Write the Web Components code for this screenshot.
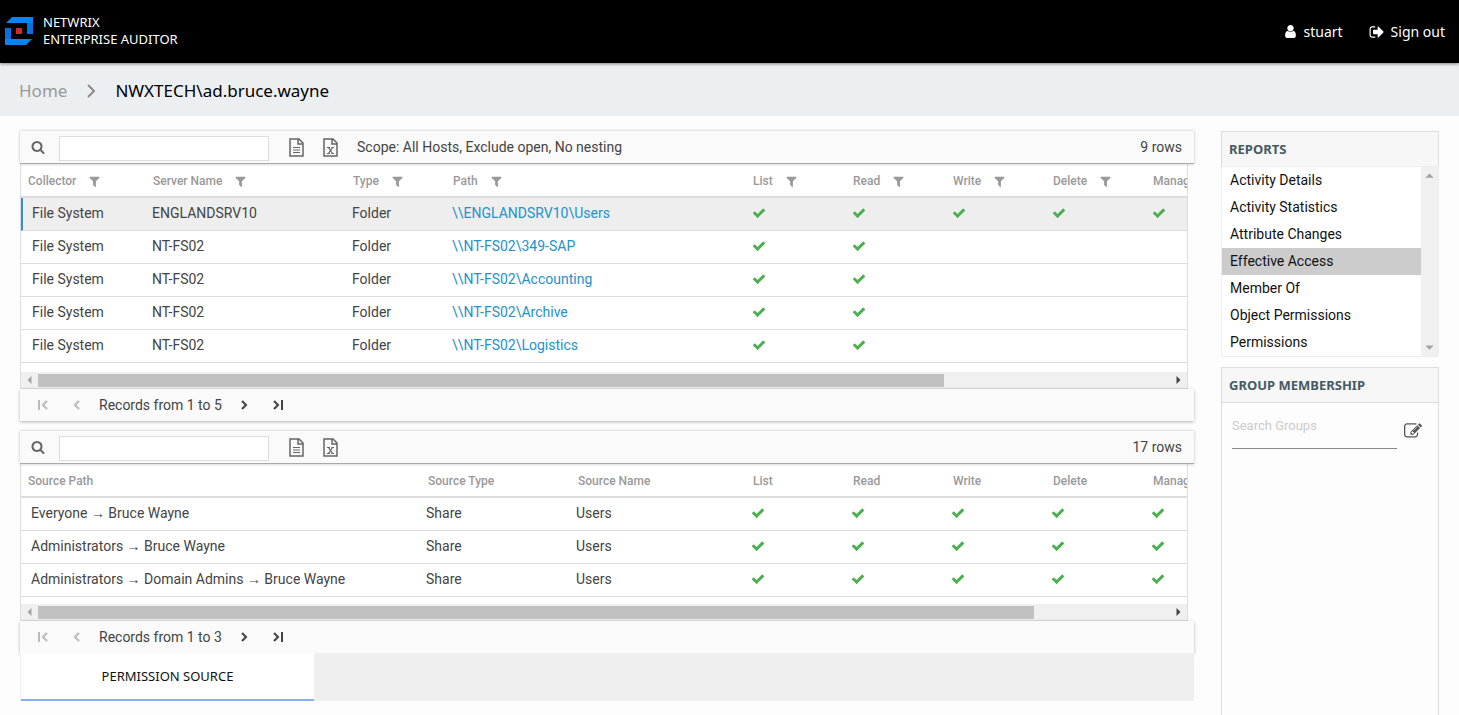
<!DOCTYPE html>
<html lang="en">
<head>
<meta charset="utf-8">
<title>Netwrix Enterprise Auditor</title>
<style>
  html, body { height: 100%; }
  body { margin: 0; background: #fdfdfd; font-family: Roboto, "Liberation Sans", sans-serif; font-size: 14px; color: #444; }
</style>
</head>
<body>
<auditor-app></auditor-app>

<template id="tpl-app">
  <style>
    :host { display: flex; flex-direction: column; min-height: 100%; height: 100%; }
    .content { flex: 1; display: flex; gap: 27px; padding: 15px 20px 0; min-height: 0; }
    main { flex: 1; min-width: 0; display: flex; flex-direction: column; gap: 10px; }
    aside { flex: none; width: 218px; display: flex; flex-direction: column; gap: 10px; }
  </style>
  <app-header user="stuart"></app-header>
  <bread-crumb>NWXTECH\ad.bruce.wayne</bread-crumb>
  <div class="content">
    <main>
      <data-grid id="access"></data-grid>
      <div>
        <data-grid id="sources"></data-grid>
        <tab-bar>PERMISSION SOURCE</tab-bar>
      </div>
    </main>
    <aside>
      <report-list></report-list>
      <group-membership></group-membership>
    </aside>
  </div>
</template>

<template id="tpl-header">
  <style>
    :host { display: flex; position: relative; z-index: 1; align-items: center; justify-content: space-between; box-sizing: border-box; height: 63px; padding: 0 14px 2px 5px; background: #000; color: #fff; box-shadow: 0 1px 3px rgba(0,0,0,.45); font-family: "Noto Sans", "Open Sans", sans-serif; }
    .brand { display: flex; gap: 10px; align-items: center; font-size: 13px; line-height: 17px; }
    nav { display: flex; gap: 26px; font-size: 14px; line-height: 20px; padding-top: 2px; }
    a { display: flex; align-items: center; gap: 6px; color: inherit; text-decoration: none; }
  </style>
  <div class="brand">
    <svg width="28" height="28" viewBox="0 0 28 28" aria-hidden="true">
      <path fill="#0a84f5" d="M7 0H28V17H22V6H1z"/>
      <path fill="#0a6fe0" d="M22 6H28V17H22z"/>
      <path fill="#0a84f5" d="M0 11H6V22H27L21 28H0z"/>
      <path fill="#0a6fe0" d="M0 11H6V22H0z"/>
      <path fill="#d3272f" d="M11 11h6v6h-6z"/>
    </svg>
    <div>NETWRIX<br>ENTERPRISE AUDITOR</div>
  </div>
  <nav>
    <a href="#user"><ui-icon name="user" size="15"></ui-icon><span class="user"></span></a>
    <a href="#signout"><ui-icon name="signout" size="16"></ui-icon>Sign out</a>
  </nav>
</template>

<template id="tpl-crumb">
  <style>
    :host { display: flex; align-items: center; gap: 20px; box-sizing: border-box; height: 53px; padding: 2px 19px 0; background: #eceff1; color: #000; font-family: "Noto Sans", "Open Sans", sans-serif; font-size: 17px; }
    a { color: #999; text-decoration: none; }
  </style>
  <a href="#home">Home</a>
  <svg width="8" height="14" viewBox="0 0 8 14" fill="none" stroke="#8c8c8c" stroke-width="2" aria-hidden="true"><path d="M1 1l6 6-6 6"/></svg>
  <span><slot></slot></span>
</template>

<template id="tpl-grid">
  <style>
    :host { display: block; }
    .bar { position: relative; display: flex; align-items: center; box-sizing: border-box; height: 32px; background: #fafafa; box-shadow: 0 1px 3px rgba(0,0,0,.3); }
    .tools { height: 33px; padding: 0 12px 0 11px; border-bottom: 1px solid #aaa; box-shadow: 0 0 3px rgba(0,0,0,.25); }
    button { all: unset; display: flex; color: #666; cursor: pointer; }
    input { box-sizing: border-box; align-self: flex-end; width: 210px; height: 25px; margin: 0 20px 2px 14px; border: 1px solid #ddd; background: #fff; font: inherit; }
    .files { display: flex; gap: 18px; margin-right: 18px; }
    .count { margin-left: auto; }
    .view { box-sizing: border-box; margin-right: 6px; border: 1px solid #ddd; border-top: 0; overflow: hidden; background: #fff; }
    .scroller { overflow: hidden; }
    table { table-layout: fixed; border-collapse: separate; border-spacing: 0; margin-bottom: var(--tail); }
    th, td { box-sizing: border-box; height: 33px; padding: 0 0 2px var(--inset); text-align: left; white-space: nowrap; vertical-align: middle; }
    th { height: 34px; padding: 2px 0 0 7px; border-bottom: 2px solid #ddd; color: #999; font-size: 12px; font-weight: 500; }
    th span { display: flex; align-items: center; gap: 12px; }
    td { border-bottom: 1px solid #ddd; font-family: Roboto, "Liberation Serif", serif; font-size: 14px; }
    td:first-child { padding-left: var(--lead); }
    td ui-icon { display: flex; color: #4caf50; }
    tr.selected td { background: #eee; }
    tr.selected td:first-child { border-left: 2px solid #3b8fc4; padding-left: 9px; }
    td a { color: #2392cf; text-decoration: none; }
    .pager { padding: 0 18px; }
    .pager span { margin: 0 19px; }
    .pager svg { display: block; fill: none; stroke: #444; stroke-width: 2; }
    .pager button:disabled svg { stroke: #bbb; }
    .step { margin: 0 25px 0 0; }
    .back { margin-right: 0; }
  </style>
  <div class="bar tools">
    <button aria-label="Search"><ui-icon name="search"></ui-icon></button>
    <input type="text" aria-label="Search rows">
    <div class="files">
      <button aria-label="Export to CSV"><ui-icon name="csv" size="16"></ui-icon></button>
      <button aria-label="Export to Excel"><ui-icon name="excel" size="16"></ui-icon></button>
    </div>
    <span class="scope"></span>
    <span class="count"></span>
  </div>
  <div class="view">
    <div class="scroller"><table><colgroup></colgroup><thead><tr></tr></thead><tbody></tbody></table></div>
    <scroll-track></scroll-track>
  </div>
  <div class="bar pager">
    <button class="step" disabled aria-label="First page"><svg width="10" height="10" viewBox="0 0 10 10"><path d="M1 0v10M9 1L5 5l4 4"/></svg></button>
    <button class="step back" disabled aria-label="Previous page"><svg width="7" height="10" viewBox="0 0 7 10"><path d="M6 1L2 5l4 4"/></svg></button>
    <span class="records"></span>
    <button class="step" aria-label="Next page"><svg width="7" height="10" viewBox="0 0 7 10"><path d="M1 1l4 4-4 4"/></svg></button>
    <button aria-label="Last page"><svg width="10" height="10" viewBox="0 0 10 10"><path d="M9 0v10M1 1l4 4-4 4"/></svg></button>
  </div>
</template>

<template id="tpl-track">
  <style>
    :host { display: flex; align-items: center; height: 16px; background: #f0f0f0; }
    :host([vertical]) { flex-direction: column; justify-content: space-between; width: 17px; height: auto; }
    .rail { flex: 1; height: 13px; }
    .thumb { width: var(--thumb); height: 100%; background: #c1c1c1; }
    :host([vertical]) .rail { display: none; }
    svg { flex: none; width: 17px; height: 16px; fill: #a3a3a3; }
    .end { fill: #444; }
    :host([vertical]) svg { height: 17px; transform: rotate(90deg); fill: #a3a3a3; }
  </style>
  <svg viewBox="0 0 16 16"><path d="M10 4v8L6 8z"/></svg>
  <div class="rail"><div class="thumb"></div></div>
  <svg class="end" viewBox="0 0 16 16"><path d="M6 4v8l4-4z"/></svg>
</template>

<template id="tpl-tabs">
  <style>
    :host { display: flex; position: relative; height: 48px; padding-left: 1px; background: #efefef; }
    button { all: unset; box-sizing: border-box; width: 293px; border-bottom: 2px solid #8ab0f0; background: #fff; color: #111; font-family: "Noto Sans", "Open Sans", sans-serif; font-size: 13px; text-align: center; cursor: pointer; }
  </style>
  <button role="tab" aria-selected="true"><slot></slot></button>
</template>

<template id="tpl-reports">
  <style>
    :host { display: block; }
    h2 { box-sizing: border-box; height: 36px; margin: 0; padding-left: 7px; border: 1px solid #ddd; border-bottom-color: #eee; background: #f7f7f7; color: #455a64; font: 700 13px/34px "Noto Sans", "Open Sans", sans-serif; }
    .body { display: flex; height: 189px; border: 1px solid #eee; border-top: 0; background: #fff; }
    ul { flex: 1; margin: 0; padding: 0; list-style: none; }
    a { display: block; padding-left: 8px; line-height: 27px; color: #111; text-decoration: none; }
    a[aria-current] { background: #ccc; }
  </style>
  <h2>REPORTS</h2>
  <div class="body">
    <ul>
      <li><a href="#details">Activity Details</a></li>
      <li><a href="#statistics">Activity Statistics</a></li>
      <li><a href="#attributes">Attribute Changes</a></li>
      <li><a href="#effective" aria-current="page">Effective Access</a></li>
      <li><a href="#memberof">Member Of</a></li>
      <li><a href="#object">Object Permissions</a></li>
      <li><a href="#permissions">Permissions</a></li>
    </ul>
    <scroll-track vertical></scroll-track>
  </div>
</template>

<template id="tpl-groups">
  <style>
    :host { display: block; flex: 1; border: 1px solid #ddd; border-bottom: 0; }
    h2 { height: 34px; margin: 0; padding-left: 7px; border-bottom: 1px solid #ddd; background: #f7f7f7; color: #455a64; font: 700 13px/34px "Noto Sans", "Open Sans", sans-serif; }
    .row { display: flex; gap: 7px; padding: 2px 16px 0 10px; }
    input { flex: 1; min-width: 0; box-sizing: border-box; height: 44px; padding: 0 0 2px; border: 0; border-bottom: 1px solid #888; background: none; font: 13px Roboto, sans-serif; outline: 0; }
    input::placeholder { color: #ccc; }
    button { all: unset; display: flex; align-items: center; padding-top: 8px; color: #555; cursor: pointer; }
  </style>
  <h2>GROUP MEMBERSHIP</h2>
  <div class="row">
    <input type="text" placeholder="Search Groups" aria-label="Search Groups">
    <button aria-label="Edit groups"><ui-icon name="edit" size="18"></ui-icon></button>
  </div>
</template>

<script>
const clone = id => document.getElementById(id).content.cloneNode(true);

class BaseElement extends HTMLElement {
  connectedCallback() {
    if (this.shadowRoot) return;
    this.attachShadow({ mode: "open" }).append(clone(this.constructor.template));
    this.ready();
  }
  ready() {}
  $(s) { return this.shadowRoot.querySelector(s); }
}

const ICONS = {
  check: '<path d="M1671 566q0 40-28 68l-724 724-136 136q-28 28-68 28t-68-28l-136-136-362-362q-28-28-28-68t28-68l136-136q28-28 68-28t68 28l294 295 656-657q28-28 68-28t68 28l136 136q28 28 28 68z"/>',
  filter: '<path d="M1595 295q17 41-14 70l-493 493v742q0 42-39 59-13 5-25 5-27 0-45-19l-256-256q-19-19-19-45v-486l-493-493q-31-29-14-70 17-39 59-39h1280q42 0 59 39z"/>',
  search: '<path d="M1216 832q0-185-131.5-316.5t-316.5-131.5-316.5 131.5-131.5 316.5 131.5 316.5 316.5 131.5 316.5-131.5 131.5-316.5zm512 832q0 52-38 90t-90 38q-54 0-90-38l-343-342q-179 124-399 124-143 0-273.5-55.5t-225-150-150-225-55.5-273.5 55.5-273.5 150-225 225-150 273.5-55.5 273.5 55.5 225 150 150 225 55.5 273.5q0 220-124 399l343 343q37 37 37 90z"/>',
  signout: '<path d="M704 1440q0 4 1 20t.5 26.5-3 23.5-10 19.5-20.5 6.5h-320q-119 0-203.5-84.5t-84.5-203.5v-704q0-119 84.5-203.5t203.5-84.5h320q13 0 22.5 9.5t9.5 22.5q0 4 1 20t.5 26.5-3 23.5-10 19.5-20.5 6.5h-320q-66 0-113 47t-47 113v704q0 66 47 113t113 47h312l11.5 1 11.5 3 8 5.5 7 9 2 13.5zm928-544q0 26-19 45l-544 544q-19 19-45 19t-45-19-19-45v-288h-448q-26 0-45-19t-19-45v-384q0-26 19-45t45-19h448v-288q0-26 19-45t45-19 45 19l544 544q19 19 19 45z"/>',
  user: '<path d="M1536 1399q0 109-62.5 187t-150.5 78h-854q-88 0-150.5-78t-62.5-187q0-85 8.5-160.5t31.5-152 58.5-131 94-89 134.5-34.5q131 128 313 128t313-128q76 0 134.5 34.5t94 89 58.5 131 31.5 152 8.5 160.5zm-256-887q0 159-112.5 271.5t-271.5 112.5-271.5-112.5-112.5-271.5 112.5-271.5 271.5-112.5 271.5 112.5 112.5 271.5z"/>',
  edit: '<path d="M888 1184l116-116-152-152-116 116v56h96v96h56zm440-720q-16-16-33 1l-350 350q-17 17-1 33t33-1l350-350q17-17 1-33zm80 594v190q0 119-84.5 203.5t-203.5 84.5h-832q-119 0-203.5-84.5t-84.5-203.5v-832q0-119 84.5-203.5t203.5-84.5h832q63 0 117 25 15 7 18 23 3 17-9 29l-49 49q-14 14-32 8-23-6-45-6h-832q-66 0-113 47t-47 113v832q0 66 47 113t113 47h832q66 0 113-47t47-113v-126q0-13 9-22l64-64q15-15 35-7t20 29zm-96-738l288 288-672 672h-288v-288zm444 132l-92 92-288-288 92-92q28-28 68-28t68 28l152 152q28 28 28 68t-28 68z"/>'
};
const SHEET = '<path d="M1 1h9l4 4v13H1zM9 1v5h5"/>';
const SHEETS = {
  csv: SHEET + '<path d="M4 9.500h7M4 12h7M4 14.500h7" stroke-width="1"/>',
  excel: SHEET + '<path d="M5.500 9.500l4 6M9.500 9.500l-4 6" stroke-width="1.300"/><path d="M4 9.500h3M8.500 9.500h2.500M4 15.500h3M8.500 15.500h2.500" stroke-width="1"/>'
};

customElements.define("ui-icon", class extends HTMLElement {
  connectedCallback() {
    if (this.shadowRoot) return;
    const name = this.getAttribute("name"), size = this.getAttribute("size") || 14;
    const svg = SHEETS[name]
      ? `<svg width="16" height="19" viewBox="0 0 16 19" fill="none" stroke="#666" stroke-width="1.500">${SHEETS[name]}</svg>`
      : `<svg width="${size}" height="${size}" viewBox="0 0 1792 1792" fill="currentColor">${ICONS[name]}</svg>`;
    this.attachShadow({ mode: "open" }).innerHTML = `<style>:host{display:inline-flex;vertical-align:middle}svg{display:block}</style>${svg}`;
  }
});

customElements.define("scroll-track", class extends BaseElement { static template = "tpl-track"; });
customElements.define("tab-bar", class extends BaseElement { static template = "tpl-tabs"; });
customElements.define("bread-crumb", class extends BaseElement { static template = "tpl-crumb"; });
customElements.define("report-list", class extends BaseElement { static template = "tpl-reports"; });
customElements.define("group-membership", class extends BaseElement { static template = "tpl-groups"; });
customElements.define("app-header", class extends BaseElement {
  static template = "tpl-header";
  ready() { this.$(".user").textContent = this.getAttribute("user"); }
});

const CHECK = '<ui-icon name="check" role="img" aria-label="Yes"></ui-icon>';
const GRIDS = {
  access: {
    scope: "Scope: All Hosts, Exclude open, No nesting", count: "9 rows", records: "Records from 1 to 5",
    filters: true, thumb: "80%", tail: "9px", lead: "11px", inset: "6px", selected: 0,
    columns: [["Collector", 125], ["Server Name", 200], ["Type", 100], ["Path", 300], ["List", 100], ["Read", 100], ["Write", 100], ["Delete", 100], ["Manage", 330]],
    rows: [
      ["File System", "ENGLANDSRV10", "Folder", "\\\\ENGLANDSRV10\\Users", 1, 1, 1, 1, 1],
      ["File System", "NT-FS02", "Folder", "\\\\NT-FS02\\349-SAP", 1, 1, 0, 0, 0],
      ["File System", "NT-FS02", "Folder", "\\\\NT-FS02\\Accounting", 1, 1, 0, 0, 0],
      ["File System", "NT-FS02", "Folder", "\\\\NT-FS02\\Archive", 1, 1, 0, 0, 0],
      ["File System", "NT-FS02", "Folder", "\\\\NT-FS02\\Logistics", 1, 1, 0, 0, 0]
    ]
  },
  sources: {
    scope: "", count: "17 rows", records: "Records from 1 to 3",
    filters: false, thumb: "88%", tail: "7px", lead: "10px", inset: "5px", selected: -1,
    columns: [["Source Path", 400], ["Source Type", 150], ["Source Name", 175], ["List", 100], ["Read", 100], ["Write", 100], ["Delete", 100], ["Manage", 204]],
    rows: [
      ["Everyone → Bruce Wayne", "Share", "Users", 1, 1, 1, 1, 1],
      ["Administrators → Bruce Wayne", "Share", "Users", 1, 1, 1, 1, 1],
      ["Administrators → Domain Admins → Bruce Wayne", "Share", "Users", 1, 1, 1, 1, 1]
    ]
  }
};

customElements.define("data-grid", class extends BaseElement {
  static template = "tpl-grid";
  ready() {
    const g = GRIDS[this.id];
    for (const key of ["thumb", "tail", "lead", "inset"]) this.style.setProperty("--" + key, g[key]);
    this.$(".scope").textContent = g.scope;
    this.$(".count").textContent = g.count;
    this.$(".records").textContent = g.records;
    this.$("table").style.width = g.columns.reduce((s, c) => s + c[1], 0) + "px";
    this.$("colgroup").innerHTML = g.columns.map(c => `<col style="width:${c[1]}px">`).join("");
    this.$("thead tr").innerHTML = g.columns.map(c => `<th scope="col"><span>${c[0]}${g.filters ? '<ui-icon name="filter" size="13"></ui-icon>' : ""}</span></th>`).join("");
    this.$("tbody").innerHTML = g.rows.map((r, i) => `<tr${i === g.selected ? ' class="selected"' : ""}>` + r.map(v => {
      const cell = v === 1 ? CHECK : v === 0 ? "" : v.startsWith("\\\\") ? `<a href="#path">${v}</a>` : v;
      return `<td>${cell}</td>`;
    }).join("") + "</tr>").join("");
  }
});

customElements.define("auditor-app", class extends BaseElement { static template = "tpl-app"; });
</script>
</body>
</html>
